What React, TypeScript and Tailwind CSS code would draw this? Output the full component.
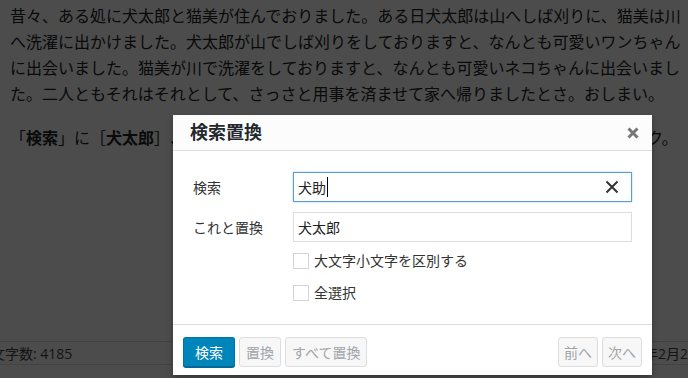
export default function App() {
  return (
    <div className="relative h-[378px] w-[688px] overflow-hidden bg-white font-['Open_Sans','Noto_Sans_CJK_JP',sans-serif] text-[#222] [text-spacing-trim:space-all]">
      <div className="px-[10px] pt-[3px] text-[16px] leading-[26px]">
        <p>
          <span className="block whitespace-nowrap">昔々、ある処に犬太郎と猫美が住んでおりました。ある日犬太郎は山へしば刈りに、猫美は川</span>
          <span className="block whitespace-nowrap">へ洗濯に出かけました。犬太郎が山でしば刈りをしておりますと、なんとも可愛いワンちゃん</span>
          <span className="block whitespace-nowrap">に出会いました。猫美が川で洗濯をしておりますと、なんとも可愛いネコちゃんに出会いまし</span>
          <span className="block whitespace-nowrap">た。二人ともそれはそれとして、さっさと用事を済ませて家へ帰りましたとさ。おしまい。</span>
        </p>
        <p className="mt-[18px] whitespace-nowrap">
          「<b>検索</b>」に［<b>犬太郎</b>］、「これと置換」に［<b>犬助</b>］を入力して、「すべて置換」をクリック。
        </p>
      </div>

      {/* status bar */}
      <div className="mt-[190px] flex h-[24px] items-center border-y border-[#ddd] text-[14px] text-[#444]">
        <span className="ml-[-9px] w-[621px] shrink-0 whitespace-nowrap">文字数: 4185</span>
        <span className="shrink-0 whitespace-nowrap">2017年2月26日 14:32</span>
      </div>

      {/* modal overlay */}
      <div className="absolute inset-0 bg-black/70">
        <div className="absolute left-[173px] top-[115px] flex h-[260px] w-[479px] flex-col bg-white shadow-[0_3px_6px_rgba(0,0,0,0.3)]">
          <div className="flex h-[36px] items-center justify-between border-b border-[#ddd] bg-[#fcfcfc] pl-[17px] pr-[12px]">
            <h2 className="text-[18px] font-bold text-[#23282d]">検索置換</h2>
            <button aria-label="閉じる" className="flex h-[14px] w-[14px] items-center justify-center">
              <svg width="12" height="12" viewBox="0 0 12 12">
                <path d="M1.5 1.5L10.5 10.5M10.5 1.5L1.5 10.5" stroke="#777" strokeWidth="3" />
              </svg>
            </button>
          </div>

          <div className="flex-1 px-[20px] pt-[21px] text-[14px] text-[#333]">
            <div className="grid grid-cols-[100px_1fr] items-center gap-y-[10px]">
              <label>検索</label>
              <div className="flex h-[30px] items-center border border-[#5b9dd9] pl-[4px] pr-[12px] shadow-[0_0_2px_rgba(30,140,190,0.4)]">
                <span className="text-[#222]">犬助</span>
                <span className="ml-[1px] h-[20px] w-[1px] bg-black" />
                <svg className="ml-auto" width="14" height="14" viewBox="0 0 14 14">
                  <path d="M1.5 1.5L12.5 12.5M12.5 1.5L1.5 12.5" stroke="#333" strokeWidth="2" />
                </svg>
              </div>
              <label>これと置換</label>
              <div className="flex h-[30px] items-center border border-[#ddd] pl-[4px] text-[#222]">犬太郎</div>
            </div>
            <div className="ml-[100px] mt-[8px] flex flex-col gap-y-[11px]">
              <label className="flex h-[21px] items-center gap-[5px]">
                <span className="h-[16px] w-[16px] border border-[#d4d4d4] bg-white" />
                大文字小文字を区別する
              </label>
              <label className="flex h-[21px] items-center gap-[5px]">
                <span className="h-[16px] w-[16px] border border-[#d4d4d4] bg-white" />
                全選択
              </label>
            </div>
          </div>

          <div className="flex h-[51px] items-start border-t border-[#ddd] px-[10px] pt-[12px] text-[14px]">
            <button className="h-[30px] rounded-[3px] border border-[#0073aa] border-b-[#006799] bg-[#0085ba] px-[11px] text-white shadow-[0_1px_0_#006799]">
              検索
            </button>
            <button className="ml-[4px] h-[30px] rounded-[3px] border border-[#ddd] bg-[#f7f7f7] px-[6px] text-[#a0a5aa]">置換</button>
            <button className="ml-[4px] h-[30px] rounded-[3px] border border-[#ddd] bg-[#f7f7f7] px-[6px] text-[#a0a5aa]">すべて置換</button>
            <button className="ml-auto h-[30px] rounded-[3px] border border-[#ddd] bg-[#f7f7f7] px-[5px] text-[#a0a5aa]">前へ</button>
            <button className="ml-[4px] h-[30px] rounded-[3px] border border-[#ddd] bg-[#f7f7f7] px-[5px] text-[#a0a5aa]">次へ</button>
          </div>
        </div>
      </div>
    </div>
  );
}
